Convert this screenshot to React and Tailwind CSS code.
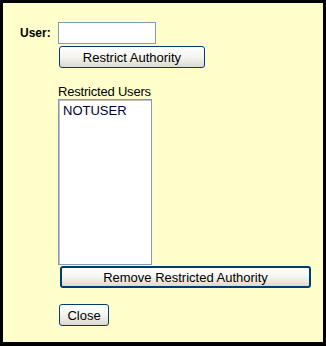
import React from 'react';

const btn =
  "block h-[22px] rounded-[3px] border border-[#003c74] bg-gradient-to-b from-white via-[#f4f4f0] to-[#dcdad0] text-[13px] leading-none text-black";

export default function App() {
  return (
    <div
      className="w-[326px] h-[346px] border-[3px] border-b-4 border-black bg-[#ffffcc] text-black"
      style={{ fontFamily: '"Liberation Sans", Arial, sans-serif' }}
    >
      <div className="pt-[19px] flex flex-col">
        {/* User row */}
        <div className="flex items-center h-[22px]">
          <label className="w-[47px] pl-[17px] text-[12px] font-bold">User:</label>
          <input
            type="text"
            className="ml-[8px] w-[98px] h-[22px] border border-[#7f9db9] bg-white outline-none px-1 text-[13px]"
          />
        </div>
        <div className="flex pl-[56px] mt-[2px]">
          <button className={`${btn} w-[146px]`}>Restrict Authority</button>
        </div>

        {/* Restricted users list */}
        <div className="pl-[55px] mt-[16px] text-[13px] leading-[15px] tracking-[-0.2px]">Restricted Users</div>
        <div className="flex pl-[55px]">
          <div className="w-[94px] h-[166px] border border-[#7f9db9] bg-white shadow-[inset_1px_1px_0_#c0c0c0] pl-[4px] pt-[3px] text-[13px] leading-[15px] text-[#000033]">
            NOTUSER
          </div>
        </div>
        <div className="flex pl-[57px] mt-[1px]">
          <button className={`${btn} w-[251px] border-2 border-[#0b3e79]`}>Remove Restricted Authority</button>
        </div>

        <div className="flex pl-[56px] mt-[16px]">
          <button className={`${btn} w-[50px]`}>Close</button>
        </div>
      </div>
    </div>
  );
}
